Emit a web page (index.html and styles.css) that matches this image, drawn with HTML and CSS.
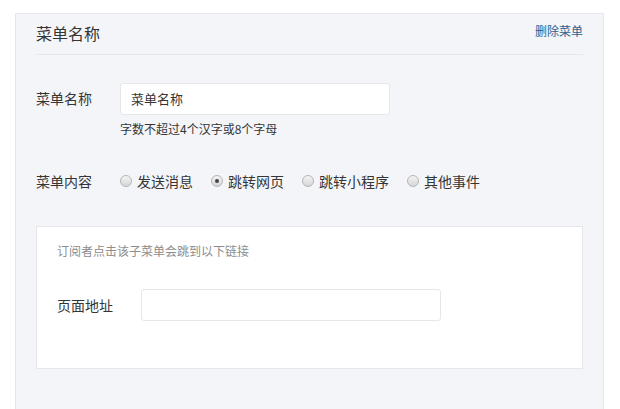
FILE: index.html
```html
<!DOCTYPE html>
<html>
<head>
<meta charset="utf-8">
<link rel="stylesheet" href="styles.css">
</head>
<body>
<div class="panel">
  <div class="panel-head">
    <h2 class="title">菜单名称</h2>
    <a class="del">删除菜单</a>
  </div>
  <div class="row row-name">
    <label class="label">菜单名称</label>
    <div class="field">
      <div class="input">菜单名称</div>
      <p class="hint">字数不超过4个汉字或8个字母</p>
    </div>
  </div>
  <div class="row row-content">
    <label class="label">菜单内容</label>
    <div class="radios">
      <span class="radio"><i class="dot"></i>发送消息</span>
      <span class="radio"><i class="dot checked"></i>跳转网页</span>
      <span class="radio"><i class="dot"></i>跳转小程序</span>
      <span class="radio"><i class="dot"></i>其他事件</span>
    </div>
  </div>
  <div class="box">
    <p class="box-tip">订阅者点击该子菜单会跳到以下链接</p>
    <div class="row row-url">
      <label class="label">页面地址</label>
      <div class="input input-url"></div>
    </div>
  </div>
</div>
</body>
</html>
```
FILE: styles.css
```css
html, body {
  margin: 0;
  padding: 0;
  background: #ffffff;
  font-family: "Noto Sans CJK SC", "Liberation Sans", sans-serif;
  color: #353535;
}
.panel {
  margin: 13px 0 0 15px;
  width: 589px;
  height: 396px;
  background: #f4f5f9;
  border: 1px solid #e7e7eb;
  border-bottom: 0;
  padding: 0 20px 0 20px;
  box-sizing: border-box;
}
.panel-head {
  height: 40px;
  border-bottom: 1px solid #e7e7eb;
  display: flex;
  justify-content: space-between;
  align-items: flex-start;
}
.title {
  margin: 8px 0 0 0;
  font-size: 16px;
  font-weight: normal;
  line-height: 22px;
  color: #353535;
}
.del {
  margin-top: 8px;
  font-size: 12px;
  line-height: 18px;
  color: #2d5f8f;
}
.row {
  display: flex;
  align-items: flex-start;
}
.row-name {
  margin-top: 28px;
}
.label {
  width: 84px;
  font-size: 14px;
  line-height: 30px;
  flex-shrink: 0;
}
.input {
  width: 270px;
  height: 32px;
  box-sizing: border-box;
  background: #fff;
  border: 1px solid #e7e7eb;
  border-radius: 3px;
  padding-left: 10px;
  font-size: 13px;
  line-height: 30px;
  color: #353535;
}
.hint {
  margin: 5px 0 0 0;
  font-size: 12px;
  line-height: 18px;
}
.row-content {
  margin-top: 28px;
  align-items: center;
}
.radios {
  display: flex;
  gap: 18px;
}
.radio {
  display: flex;
  align-items: center;
  font-size: 14px;
  line-height: 20px;
}
.dot {
  width: 12px;
  height: 12px;
  box-sizing: border-box;
  border-radius: 50%;
  border: 1px solid #b5b5b5;
  background: linear-gradient(#f4f4f4, #d6d6d6);
  margin-right: 5px;
  position: relative;
}
.dot.checked::after {
  content: "";
  position: absolute;
  left: 3px;
  top: 3px;
  width: 4px;
  height: 4px;
  border-radius: 50%;
  background: #444;
}
.box {
  margin-top: 30px;
  background: #fff;
  border: 1px solid #e7e7eb;
  height: 143px;
  box-sizing: border-box;
  padding: 0 20px;
}
.box-tip {
  margin: 15px 0 0 0;
  font-size: 12px;
  line-height: 18px;
  color: #8d8d8d;
}
.row-url {
  margin-top: 29px;
  align-items: center;
}
.input-url {
  width: 300px;
}
```
